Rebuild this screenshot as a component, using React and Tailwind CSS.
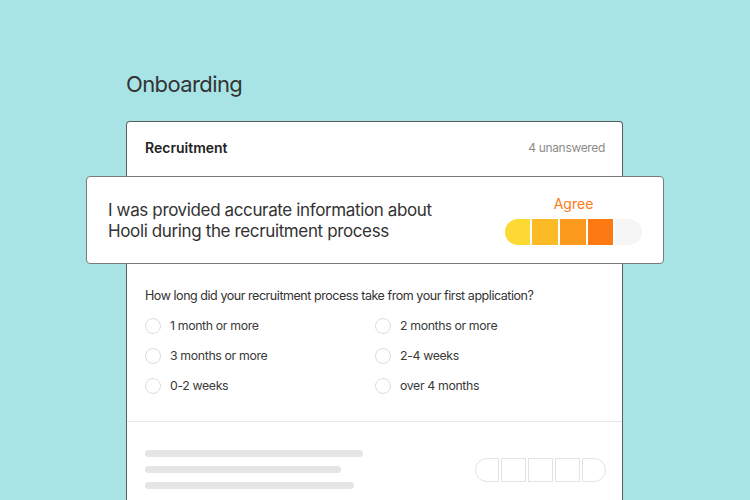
import React from 'react';

const options = [
  '1 month or more',
  '2 months or more',
  '3 months or more',
  '2-4 weeks',
  '0-2 weeks',
  'over 4 months',
];

const Radio = ({ label }) => (
  <div className="flex items-center h-[30px] gap-[9px]">
    <span className="w-[16px] h-[16px] rounded-full border border-[#dcdcdc] bg-white shrink-0" />
    <span className="text-[12.3px] tracking-[-0.35px] text-[#3a3a3a]">{label}</span>
  </div>
);

const App = () => {
  return (
    <div
      className="w-[750px] h-[500px] overflow-hidden bg-[#a8e4e6]"
      style={{ fontFamily: 'Inter, "Noto Sans", sans-serif' }}
    >
      <div className="pl-[126px] pr-[127px] pt-[70px]">
        {/* Title */}
        <h1 className="text-[22px] leading-[28px] tracking-[-0.6px] text-[#333] font-normal">Onboarding</h1>

        {/* Card */}
        <div className="mt-[23px] bg-white border border-[#5c5c5c] rounded-t-[4px] border-b-0 h-[400px]">
          <div className="flex justify-between items-center h-[51px] px-[18px] pr-[17px]">
            <span className="text-[14px] font-semibold text-[#222]">Recruitment</span>
            <span className="text-[12px] tracking-[-0.33px] text-[#8c8c8c]">4 unanswered</span>
          </div>

          {/* Floating statement */}
          <div className="relative z-10 -ml-[41px] -mr-[42px] mt-[3px] h-[88px] bg-white border border-[#7a7a7a] rounded-[4px] flex items-center justify-between pl-[21px] pr-[21px]">
            <p className="text-[17px] leading-[21px] tracking-[-0.37px] text-[#333] pt-[2px]">
              I was provided accurate information about
              <br />
              Hooli during the recruitment process
            </p>
            <div className="flex flex-col items-center gap-[5px] pb-[1px]">
              <span className="text-[14px] leading-[20px] text-[#fb7a14]">Agree</span>
              <div className="flex gap-[2px]">
                <span className="w-[25px] h-[26px] bg-[#fdd934] rounded-l-full" />
                <span className="w-[26px] h-[26px] bg-[#fcba25]" />
                <span className="w-[26px] h-[26px] bg-[#fc9a1d]" />
                <span className="w-[25px] h-[26px] bg-[#fd7912]" />
                <span className="w-[27px] h-[26px] bg-[#f6f6f6] rounded-r-full" />
              </div>
            </div>
          </div>

          {/* Question */}
          <div className="px-[18px] pt-[22px] pb-[20px] border-b border-[#e6e6e6]">
            <p className="text-[12.5px] leading-[20px] tracking-[-0.45px] text-[#333]">
              How long did your recruitment process take from your first application?
            </p>
            <div className="grid grid-cols-[230px_1fr] mt-[5px]">
              {options.map((o) => (
                <Radio key={o} label={o} />
              ))}
            </div>
          </div>

          {/* Skeleton row */}
          <div className="flex justify-between items-center pl-[18px] pr-[16px] pt-[28px]">
            <div className="flex flex-col gap-[9px]">
              <span className="block w-[218px] h-[7px] rounded-full bg-[#e5e5e5]" />
              <span className="block w-[196px] h-[7px] rounded-full bg-[#e5e5e5]" />
              <span className="block w-[209px] h-[7px] rounded-full bg-[#e5e5e5]" />
            </div>
            <div className="flex gap-[2px]">
              <span className="w-[24px] h-[24px] border border-[#e3e3e3] rounded-l-full" />
              <span className="w-[25px] h-[24px] border border-[#e3e3e3]" />
              <span className="w-[25px] h-[24px] border border-[#e3e3e3]" />
              <span className="w-[25px] h-[24px] border border-[#e3e3e3]" />
              <span className="w-[24px] h-[24px] border border-[#e3e3e3] rounded-r-full" />
            </div>
          </div>
        </div>
      </div>
    </div>
  );
};

export default App;
